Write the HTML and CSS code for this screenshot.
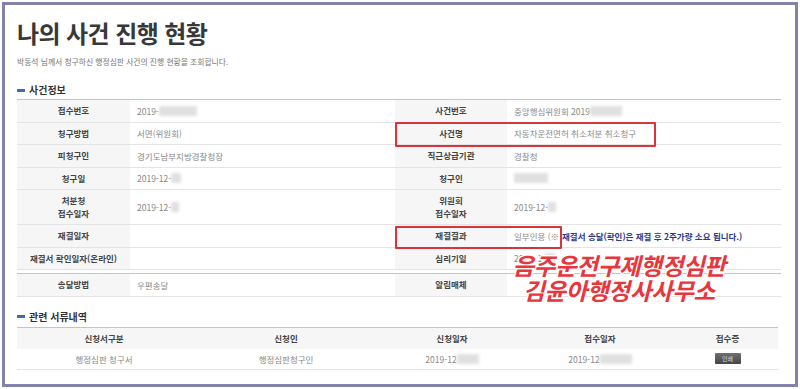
FILE: index.html
```html
<!DOCTYPE html>
<html lang="ko">
<head>
    <meta charset="UTF-8">
    <title>나의 사건 진행 현황</title>
    <link rel="stylesheet" href="styles.css">
</head>
<body>
    <div class="frame">
        <h1>나의 사건 진행 현황</h1>
        <p class="subtitle">박동석 님께서 청구하신 행정심판 사건의 진행 현황을 조회합니다.</p>

        <h2 class="section-title"><span class="dash"></span>사건정보</h2>

        <div class="info">
            <div class="row">
                <div class="label">접수번호</div>
                <div class="value">2019-<span class="blur w38"></span></div>
                <div class="label">사건번호</div>
                <div class="value">중앙행심위원회 2019<span class="blur w32"></span></div>
            </div>
            <div class="row">
                <div class="label">청구방법</div>
                <div class="value">서면(위원회)</div>
                <div class="label">사건명</div>
                <div class="value">자동차운전면허 취소처분 취소청구</div>
            </div>
            <div class="row">
                <div class="label">피청구인</div>
                <div class="value">경기도남부지방경찰청장</div>
                <div class="label">직근상급기관</div>
                <div class="value">경찰청</div>
            </div>
            <div class="row">
                <div class="label">청구일</div>
                <div class="value">2019-12-<span class="blur w10"></span></div>
                <div class="label">청구인</div>
                <div class="value"><span class="blur w34"></span></div>
            </div>
            <div class="row tall">
                <div class="label">처분청<br>접수일자</div>
                <div class="value">2019-12-<span class="blur w8"></span></div>
                <div class="label">위원회<br>접수일자</div>
                <div class="value">2019-12-<span class="blur w8"></span></div>
            </div>
            <div class="row">
                <div class="label">재결일자</div>
                <div class="value"></div>
                <div class="label">재결결과</div>
                <div class="value">일부인용 (※ <span class="notice">재결서 송달(확인)은 재결 후 2주가량 소요 됩니다.)</span></div>
            </div>
            <div class="row">
                <div class="label">재결서 확인일자(온라인)</div>
                <div class="value"></div>
                <div class="label">심리기일</div>
                <div class="value">2020. 1. <span class="blur w10"></span></div>
            </div>
        </div>

        <div class="info delivery">
            <div class="row">
                <div class="label">송달방법</div>
                <div class="value">우편송달</div>
                <div class="label">알림매체</div>
                <div class="value"></div>
            </div>
        </div>

        <h2 class="section-title docs-title"><span class="dash"></span>관련 서류내역</h2>

        <div class="docs">
            <div class="docs-row head">
                <div>신청서구분</div>
                <div>신청인</div>
                <div>신청일자</div>
                <div>접수일자</div>
                <div>접수증</div>
            </div>
            <div class="docs-row">
                <div>행정심판 청구서</div>
                <div>행정심판청구인</div>
                <div>2019-12<span class="blur w22"></span></div>
                <div>2019-12<span class="blur w32"></span></div>
                <div><span class="print-btn">인쇄</span></div>
            </div>
        </div>

        <!-- annotations drawn over the screenshot -->
        <div class="mark mark-name"></div>
        <div class="mark mark-result"></div>
        <div class="stamp">음주운전구제행정심판<br>김윤아행정사사무소</div>
    </div>
</body>
</html>
```

FILE: styles.css
```css
* {
    margin: 0;
    padding: 0;
    box-sizing: border-box;
}

body {
    font-family: "Noto Sans CJK KR", "Noto Sans", sans-serif;
    background: #fff;
}

.frame {
    position: relative;
    margin: 2px;
    width: 796px;
    height: 385px;
    border: 3px solid #8383aa;
    padding: 0 14px 0 12px;
    background: #fff;
    overflow: hidden;
}

h1 {
    margin-top: 13px;
    font-size: 24px;
    line-height: 29px;
    font-weight: 700;
    letter-spacing: -0.6px;
    color: #383838;
}

.subtitle {
    margin-top: 10px;
    font-size: 7.8px;
    line-height: 10px;
    color: #777;
}

.section-title {
    display: flex;
    align-items: center;
    margin-top: 17px;
    font-size: 10px;
    line-height: 12px;
    font-weight: 700;
    color: #333;
}

.dash {
    display: inline-block;
    width: 8px;
    height: 3px;
    margin-right: 4px;
    background: #3d6fb0;
}

.info {
    margin-top: 3px;
    border-top: 1px solid #c4c4c4;
    font-size: 8.5px;
}

.row {
    display: grid;
    grid-template-columns: 113px 265px 112px 271px;
    height: 22.5px;
    border-bottom: 1px solid #e4e4e4;
}

.row.tall {
    height: 35px;
}

.label {
    display: flex;
    align-items: center;
    justify-content: center;
    text-align: center;
    line-height: 13px;
    background: #f6f6f6;
    color: #444;
    font-weight: 700;
}

.value {
    display: flex;
    align-items: center;
    padding-left: 7px;
    color: #888;
    white-space: nowrap;
}

.notice {
    margin-left: 3px;
    color: #2b3a8c;
    font-weight: 700;
}

.delivery {
    margin-top: 3px;
}

.blur {
    display: inline-block;
    height: 10px;
    background: #e0e0e0;
    filter: blur(1.5px);
}

.w8 { width: 8px; }
.w10 { width: 10px; }
.w22 { width: 22px; }
.w32 { width: 32px; }
.w34 { width: 34px; }
.w38 { width: 38px; }

.docs-title {
    margin-top: 14px;
}

.docs {
    margin-top: 4px;
    width: 761px;
    border-top: 1px solid #c4c4c4;
    font-size: 8.5px;
}

.docs-row {
    display: grid;
    grid-template-columns: 174px 190px 142px 154px 101px;
    height: 21px;
    border-bottom: 1px solid #e4e4e4;
    color: #888;
}

.docs-row > div {
    display: flex;
    align-items: center;
    justify-content: center;
}

.docs-row.head {
    background: #f6f6f6;
    color: #444;
    font-weight: 700;
    border-bottom-color: #f6f6f6;
}

.print-btn {
    display: inline-block;
    width: 26px;
    height: 11px;
    line-height: 11px;
    text-align: center;
    font-size: 6px;
    color: #ddd;
    background: linear-gradient(#707070, #454545);
    border-radius: 1px;
}

.mark {
    position: absolute;
    border: 2px solid #d8343c;
    border-radius: 1px;
}

.mark-name {
    left: 390px;
    top: 117px;
    width: 261px;
    height: 25px;
}

.mark-result {
    left: 390px;
    top: 221px;
    width: 167px;
    height: 23px;
}

.stamp {
    position: absolute;
    left: 484px;
    top: 248px;
    width: 260px;
    text-align: center;
    font-size: 23.5px;
    line-height: 25px;
    font-weight: 700;
    font-style: italic;
    letter-spacing: -0.3px;
    color: #e8363d;
    text-shadow: 1px 0 #fff, -1px 0 #fff, 0 1px #fff, 0 -1px #fff,
                 1px 1px #fff, -1px -1px #fff, 1px -1px #fff, -1px 1px #fff;
}
```
